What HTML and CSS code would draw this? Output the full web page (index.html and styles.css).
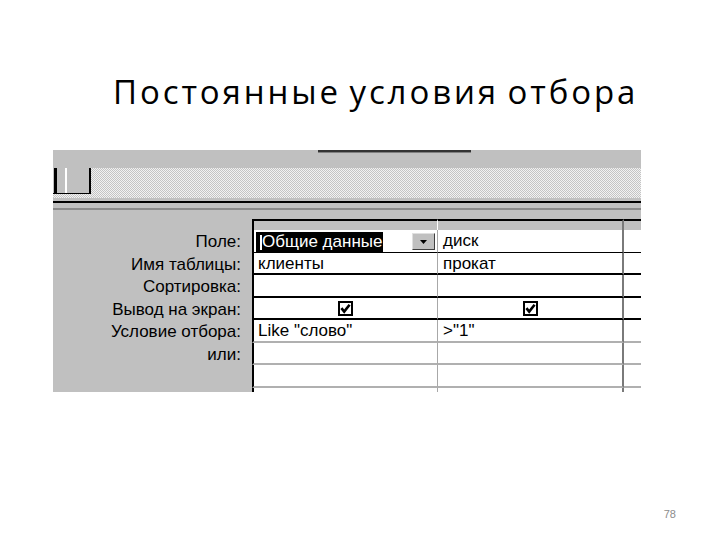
FILE: index.html
```html
<!DOCTYPE html>
<html lang="ru">
<head>
<meta charset="utf-8">
<title>Постоянные условия отбора</title>
<link rel="stylesheet" href="styles.css">
</head>
<body>
<div class="slide">
  <h1 class="title">Постоянные условия отбора</h1>
  <div class="panel">
    <div class="topbar"><div class="tabline"></div></div>
    <div class="toolbar">
      <div class="tbtns">
        <div class="tb-a"></div>
        <div class="tb-b"></div>
      </div>
    </div>
    <div class="seps"></div>
    <div class="qbe">
      <div class="lab"></div>
      <div class="hd c1"></div>
      <div class="hd c2"></div>
      <div class="hd c3"></div>

      <div class="lab">Поле:</div>
      <div class="cell c1 rb1 first">
        <span class="sel"><span class="caret"></span>Общие данные</span>
        <span class="dd"><svg width="7" height="4" viewBox="0 0 7 4"><path d="M0 0H7L3.5 4Z" fill="#000"/></svg></span>
      </div>
      <div class="cell c2 rb1">диск</div>
      <div class="cell c3 rb1"></div>

      <div class="lab">Имя таблицы:</div>
      <div class="cell c1 rb2">клиенты</div>
      <div class="cell c2 rb2">прокат</div>
      <div class="cell c3 rb2"></div>

      <div class="lab">Сортировка:</div>
      <div class="cell c1 rb2"></div>
      <div class="cell c2 rb2"></div>
      <div class="cell c3 rb2"></div>

      <div class="lab">Вывод на экран:</div>
      <div class="cell c1 rb2 chk"><svg class="box" width="15" height="15" viewBox="0 0 15 15"><rect x="1" y="1" width="13" height="13" fill="#fff" stroke="#000" stroke-width="2"/><path d="M3.4 7.2L6.2 10.6L11.6 3.8" fill="none" stroke="#000" stroke-width="2.6"/></svg></div>
      <div class="cell c2 rb2 chk"><svg class="box" width="15" height="15" viewBox="0 0 15 15"><rect x="1" y="1" width="13" height="13" fill="#fff" stroke="#000" stroke-width="2"/><path d="M3.4 7.2L6.2 10.6L11.6 3.8" fill="none" stroke="#000" stroke-width="2.6"/></svg></div>
      <div class="cell c3 rb2"></div>

      <div class="lab">Условие отбора:</div>
      <div class="cell c1 rb3">Like "слово"</div>
      <div class="cell c2 rb3">&gt;"1"</div>
      <div class="cell c3 rb3"></div>

      <div class="lab">или:</div>
      <div class="cell c1 rb3"></div>
      <div class="cell c2 rb3"></div>
      <div class="cell c3 rb3"></div>

      <div class="lab"></div>
      <div class="cell c1 rb3"></div>
      <div class="cell c2 rb3"></div>
      <div class="cell c3 rb3"></div>

      <div class="lab"></div>
      <div class="cell c1"></div>
      <div class="cell c2"></div>
      <div class="cell c3"></div>
    </div>
  </div>
  <div class="pagenum">78</div>
</div>
</body>
</html>
```
FILE: styles.css
```css
* { box-sizing: border-box; }
html, body { margin: 0; padding: 0; background: #fff; }
.slide {
  width: 720px;
  height: 540px;
  overflow: hidden;
  position: relative;
}
.title {
  margin: 72px 0 0 113px;
  height: 78px;
  font-family: "Open Sans", "DejaVu Sans", sans-serif;
  font-weight: 400;
  font-size: 33px;
  letter-spacing: 2.9px;
  word-spacing: -3px;
  line-height: 40px;
  color: #000;
  white-space: nowrap;
}
.panel {
  margin-left: 53px;
  width: 588px;
  height: 242px;
  background: #c0c0c0;
  overflow: hidden;
}
.topbar {
  height: 18px;
}
.tabline {
  margin-left: 265px;
  width: 153px;
  height: 3px;
  border-top: 2px solid #333;
  border-bottom: 1px solid #808080;
}
.toolbar {
  height: 30px;
  background-color: #fff;
  background-image: conic-gradient(#c4c4c4 25%, #f2f2f2 0 50%, #c4c4c4 0 75%, #f2f2f2 0);
  background-size: 2px 2px;
}
.tbtns {
  width: 38px;
  height: 26px;
  background: #c0c0c0;
  border-bottom: 1px solid #000;
  display: flex;
}
.tb-a {
  width: 3px;
  margin-left: 1px;
  background: #000;
}
.tb-b {
  margin-left: 8px;
  width: 26px;
  border-left: 2px solid #fff;
  border-right: 2px solid #000;
}
.seps {
  height: 21px;
  background: linear-gradient(to bottom,
    #c0c0c0 0 3px,
    #000 3px 5px,
    #c0c0c0 5px 10px,
    #8a8a8a 10px 12px,
    #c0c0c0 12px 21px);
}
.qbe {
  display: grid;
  grid-template-columns: 199px 186px 186px 1fr;
  grid-template-rows: 11px 23px 22px 23px 22px 23px 22px 23px 10px;
  font-family: "Liberation Sans", Arial, sans-serif;
  font-size: 17px;
  color: #000;
}
.lab {
  text-align: right;
  padding-right: 11px;
  line-height: 23px;
  white-space: nowrap;
}
.hd {
  background: #c0c0c0;
  border-top: 2px solid #000;
}
.cell {
  background: #fff;
  line-height: 22px;
  padding-left: 4px;
  white-space: nowrap;
}
.c1 { border-left: 2px solid #000; border-right: 1px solid #a8a8a8; }
.c2 { border-right: 2px solid #7a7a7a; padding-left: 5px; }
.c3 { padding-left: 0; }
.hd.c1 { border-right: 1px solid #fff; }
.hd.c2 { border-right: 2px solid #7a7a7a; }
.rb1 { border-bottom: 1px solid #000; }
.rb2 { border-bottom: 2px solid #000; }
.rb3 { border-bottom: 2px solid #b0b0b0; }
.first {
  display: flex;
  align-items: flex-start;
  padding-left: 2px;
}
.sel {
  display: flex;
  align-items: center;
  margin-top: 2px;
  height: 20px;
  background: #000;
  color: #fff;
  padding-left: 4px;
  padding-right: 1px;
  line-height: 20px;
}
.caret {
  display: inline-block;
  width: 2px;
  height: 15px;
  background: #fff;
}
.dd {
  margin: 3px 2px 0 auto;
  width: 23px;
  height: 17px;
  background: #c0c0c0;
  border: 1px solid;
  border-color: #e0e0e0 #404040 #404040 #e0e0e0;
  display: flex;
  align-items: center;
  justify-content: center;
}
.dd svg { display: block; }
.chk {
  display: flex;
  justify-content: center;
  align-items: center;
  padding-left: 0;
}
.box { display: block; }
.pagenum {
  margin-top: 115px;
  padding-right: 44px;
  text-align: right;
  font-family: "Liberation Sans", Arial, sans-serif;
  font-size: 11px;
  line-height: 14px;
  color: #8c8c8c;
}
```
